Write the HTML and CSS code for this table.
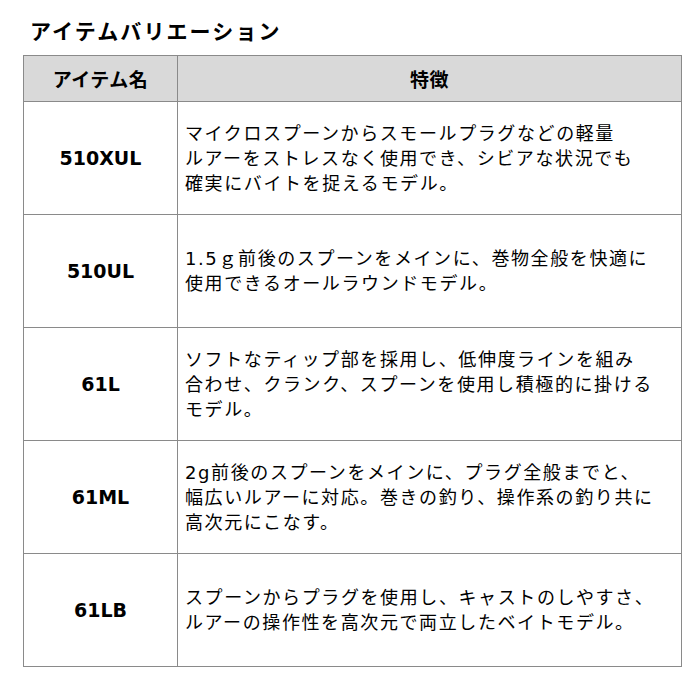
FILE: index.html
```html
<!DOCTYPE html>
<html lang="ja">
<head>
<meta charset="utf-8">
<link rel="stylesheet" href="styles.css">
</head>
<body>
<div class="page">
  <h2 class="title">アイテムバリエーション</h2>
  <table class="spec">
    <thead>
      <tr class="head-row">
        <th class="col-name">アイテム名</th>
        <th class="col-desc">特徴</th>
      </tr>
    </thead>
    <tbody>
      <tr>
        <td class="name">510XUL</td>
        <td class="desc">マイクロスプーンからスモールプラグなどの軽量<br>ルアーをストレスなく使用でき、シビアな状況でも<br>確実にバイトを捉えるモデル。</td>
      </tr>
      <tr>
        <td class="name">510UL</td>
        <td class="desc">1.5ｇ前後のスプーンをメインに、巻物全般を快適に<br>使用できるオールラウンドモデル。</td>
      </tr>
      <tr>
        <td class="name">61L</td>
        <td class="desc">ソフトなティップ部を採用し、低伸度ラインを組み<br>合わせ、クランク、スプーンを使用し積極的に掛ける<br>モデル。</td>
      </tr>
      <tr>
        <td class="name">61ML</td>
        <td class="desc">2g前後のスプーンをメインに、プラグ全般までと、<br>幅広いルアーに対応。巻きの釣り、操作系の釣り共に<br>高次元にこなす。</td>
      </tr>
      <tr>
        <td class="name">61LB</td>
        <td class="desc">スプーンからプラグを使用し、キャストのしやすさ、<br>ルアーの操作性を高次元で両立したベイトモデル。</td>
      </tr>
    </tbody>
  </table>
</div>
</body>
</html>
```

FILE: styles.css
```css
html, body {
  margin: 0;
  padding: 0;
  background: #ffffff;
}

body {
  font-family: "DejaVu Sans", "Noto Sans CJK JP", sans-serif;
  color: #000000;
}

.page {
  padding: 16px 18px 0 23px;
}

.title {
  margin: 0 0 10px 7px;
  font-size: 21px;
  line-height: 29px;
  font-weight: bold;
  letter-spacing: 2.1px;
  font-family: "Noto Sans CJK JP", sans-serif;
}

.spec {
  width: 659px;
  border-collapse: collapse;
  table-layout: fixed;
}

.spec th,
.spec td {
  border: 1px solid #8a8a8a;
  padding: 0;
}

.col-name {
  width: 153px;
}

.head-row th {
  height: 45px;
  background: #d9d9d9;
  font-family: "Noto Sans CJK JP", sans-serif;
  font-size: 19px;
  font-weight: bold;
  letter-spacing: 0.5px;
  text-align: center;
  vertical-align: middle;
}

.spec tbody td {
  height: 112px;
  vertical-align: middle;
}

.name {
  text-align: center;
  font-size: 19px;
  font-weight: bold;
}

.desc {
  padding-left: 7px !important;
  font-size: 18px;
  line-height: 25px;
  letter-spacing: 1.6px;
  white-space: nowrap;
}
```
